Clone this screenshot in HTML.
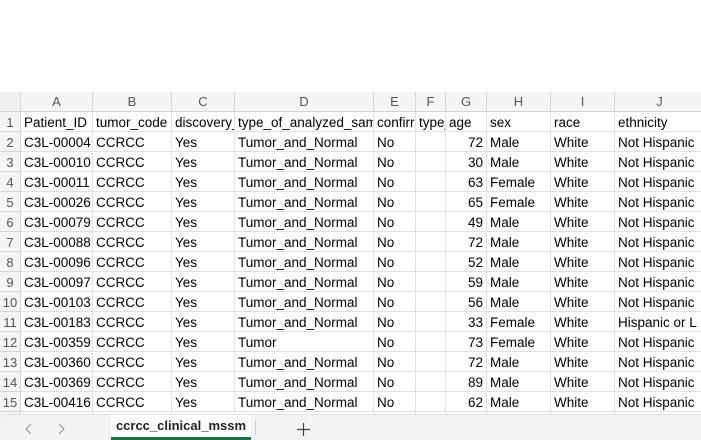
<!DOCTYPE html>
<html><head><style>
body{margin:0;width:701px;height:439px;background:#fff;overflow:hidden;position:relative;font-family:"Liberation Sans",Arial,sans-serif;}
.g{position:absolute;left:0;top:92px;width:720px;}
.row{display:flex;height:20px;}
.c{box-sizing:border-box;height:20px;border-right:1px solid #e1e1e1;border-bottom:1px solid #e1e1e1;padding:1px 0 0 3px;white-space:nowrap;overflow:hidden;font-size:13.5px;line-height:20px;color:#000;flex:none;}
.h .c{background:#f5f5f5;color:#555;text-align:center;font-size:13px;border-color:#d4d4d4;padding:0;}
.c.r{background:#f5f5f5;color:#555;text-align:center;padding:1px 0 0 0;border-color:#d4d4d4;font-size:13px;}
.n{text-align:right;padding:1px 3px 0 0;}
.w0{width:21px}.w1{width:72px}.w2{width:79px}.w3{width:63px}.w4{width:139px}.w5{width:42px}.w6{width:30px}.w7{width:41px}.w8{width:64px}.w9{width:64px}.w10{width:90px}
.tb{position:absolute;left:0;top:414px;width:701px;height:25px;background:#f3f3f3;border-top:1px solid #e0e0e0;border-radius:6px 0 0 0;}
.tab{position:absolute;left:111px;top:0;width:140px;height:22px;background:#fff;border-bottom:3px solid #1e7145;font-weight:bold;font-size:13px;color:#222;text-align:center;line-height:22px;}
</style></head><body>
<div class="g">
<div class="row h"><div class="c w0" style="background:#f0f0f0"></div><div class="c w1">A</div><div class="c w2">B</div><div class="c w3">C</div><div class="c w4">D</div><div class="c w5">E</div><div class="c w6">F</div><div class="c w7">G</div><div class="c w8">H</div><div class="c w9">I</div><div class="c w10">J</div></div>
<div class="row"><div class="c r w0">1</div><div class="c w1">Patient_ID</div><div class="c w2">tumor_code</div><div class="c w3">discovery_</div><div class="c w4">type_of_analyzed_sam</div><div class="c w5">confirr</div><div class="c w6">type_</div><div class="c w7">age</div><div class="c w8">sex</div><div class="c w9">race</div><div class="c w10">ethnicity</div></div>
<div class="row"><div class="c r w0">2</div><div class="c w1">C3L-00004</div><div class="c w2">CCRCC</div><div class="c w3">Yes</div><div class="c w4">Tumor_and_Normal</div><div class="c w5">No</div><div class="c w6"></div><div class="c w7 n">72</div><div class="c w8">Male</div><div class="c w9">White</div><div class="c w10">Not Hispanic</div></div>
<div class="row"><div class="c r w0">3</div><div class="c w1">C3L-00010</div><div class="c w2">CCRCC</div><div class="c w3">Yes</div><div class="c w4">Tumor_and_Normal</div><div class="c w5">No</div><div class="c w6"></div><div class="c w7 n">30</div><div class="c w8">Male</div><div class="c w9">White</div><div class="c w10">Not Hispanic</div></div>
<div class="row"><div class="c r w0">4</div><div class="c w1">C3L-00011</div><div class="c w2">CCRCC</div><div class="c w3">Yes</div><div class="c w4">Tumor_and_Normal</div><div class="c w5">No</div><div class="c w6"></div><div class="c w7 n">63</div><div class="c w8">Female</div><div class="c w9">White</div><div class="c w10">Not Hispanic</div></div>
<div class="row"><div class="c r w0">5</div><div class="c w1">C3L-00026</div><div class="c w2">CCRCC</div><div class="c w3">Yes</div><div class="c w4">Tumor_and_Normal</div><div class="c w5">No</div><div class="c w6"></div><div class="c w7 n">65</div><div class="c w8">Female</div><div class="c w9">White</div><div class="c w10">Not Hispanic</div></div>
<div class="row"><div class="c r w0">6</div><div class="c w1">C3L-00079</div><div class="c w2">CCRCC</div><div class="c w3">Yes</div><div class="c w4">Tumor_and_Normal</div><div class="c w5">No</div><div class="c w6"></div><div class="c w7 n">49</div><div class="c w8">Male</div><div class="c w9">White</div><div class="c w10">Not Hispanic</div></div>
<div class="row"><div class="c r w0">7</div><div class="c w1">C3L-00088</div><div class="c w2">CCRCC</div><div class="c w3">Yes</div><div class="c w4">Tumor_and_Normal</div><div class="c w5">No</div><div class="c w6"></div><div class="c w7 n">72</div><div class="c w8">Male</div><div class="c w9">White</div><div class="c w10">Not Hispanic</div></div>
<div class="row"><div class="c r w0">8</div><div class="c w1">C3L-00096</div><div class="c w2">CCRCC</div><div class="c w3">Yes</div><div class="c w4">Tumor_and_Normal</div><div class="c w5">No</div><div class="c w6"></div><div class="c w7 n">52</div><div class="c w8">Male</div><div class="c w9">White</div><div class="c w10">Not Hispanic</div></div>
<div class="row"><div class="c r w0">9</div><div class="c w1">C3L-00097</div><div class="c w2">CCRCC</div><div class="c w3">Yes</div><div class="c w4">Tumor_and_Normal</div><div class="c w5">No</div><div class="c w6"></div><div class="c w7 n">59</div><div class="c w8">Male</div><div class="c w9">White</div><div class="c w10">Not Hispanic</div></div>
<div class="row"><div class="c r w0">10</div><div class="c w1">C3L-00103</div><div class="c w2">CCRCC</div><div class="c w3">Yes</div><div class="c w4">Tumor_and_Normal</div><div class="c w5">No</div><div class="c w6"></div><div class="c w7 n">56</div><div class="c w8">Male</div><div class="c w9">White</div><div class="c w10">Not Hispanic</div></div>
<div class="row"><div class="c r w0">11</div><div class="c w1">C3L-00183</div><div class="c w2">CCRCC</div><div class="c w3">Yes</div><div class="c w4">Tumor_and_Normal</div><div class="c w5">No</div><div class="c w6"></div><div class="c w7 n">33</div><div class="c w8">Female</div><div class="c w9">White</div><div class="c w10">Hispanic or L</div></div>
<div class="row"><div class="c r w0">12</div><div class="c w1">C3L-00359</div><div class="c w2">CCRCC</div><div class="c w3">Yes</div><div class="c w4">Tumor</div><div class="c w5">No</div><div class="c w6"></div><div class="c w7 n">73</div><div class="c w8">Female</div><div class="c w9">White</div><div class="c w10">Not Hispanic</div></div>
<div class="row"><div class="c r w0">13</div><div class="c w1">C3L-00360</div><div class="c w2">CCRCC</div><div class="c w3">Yes</div><div class="c w4">Tumor_and_Normal</div><div class="c w5">No</div><div class="c w6"></div><div class="c w7 n">72</div><div class="c w8">Male</div><div class="c w9">White</div><div class="c w10">Not Hispanic</div></div>
<div class="row"><div class="c r w0">14</div><div class="c w1">C3L-00369</div><div class="c w2">CCRCC</div><div class="c w3">Yes</div><div class="c w4">Tumor_and_Normal</div><div class="c w5">No</div><div class="c w6"></div><div class="c w7 n">89</div><div class="c w8">Male</div><div class="c w9">White</div><div class="c w10">Not Hispanic</div></div>
<div class="row"><div class="c r w0">15</div><div class="c w1">C3L-00416</div><div class="c w2">CCRCC</div><div class="c w3">Yes</div><div class="c w4">Tumor_and_Normal</div><div class="c w5">No</div><div class="c w6"></div><div class="c w7 n">62</div><div class="c w8">Male</div><div class="c w9">White</div><div class="c w10">Not Hispanic</div></div>
<div class="row"><div class="c r w0"></div><div class="c w1"></div><div class="c w2"></div><div class="c w3"></div><div class="c w4"></div><div class="c w5"></div><div class="c w6"></div><div class="c w7"></div><div class="c w8"></div><div class="c w9"></div><div class="c w10"></div></div>
</div>
<div class="tb">
<svg style="position:absolute;left:22px;top:8px" width="50" height="12"><path d="M9 1 L4 6 L9 11" stroke="#999" fill="none" stroke-width="1.2"/><path d="M37 1 L42 6 L37 11" stroke="#999" fill="none" stroke-width="1.2"/></svg>
<div class="tab">ccrcc_clinical_mssm</div>
<div style="position:absolute;left:255px;top:6px;width:1px;height:14px;background:#ccc"></div>
<svg style="position:absolute;left:297px;top:8px" width="13" height="13"><path d="M6.5 0 V13 M0 6.5 H13" stroke="#444" stroke-width="1.2"/></svg>
</div>
</body></html>
